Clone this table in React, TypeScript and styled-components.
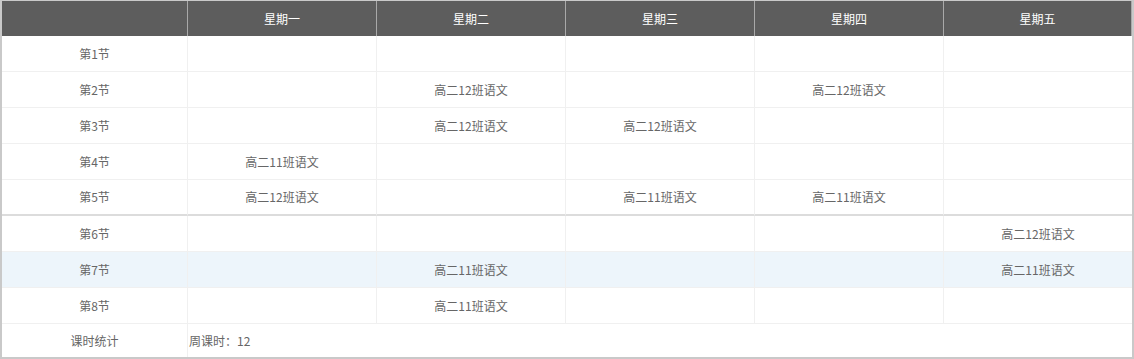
import React, { FC } from 'react';
import styled, { createGlobalStyle } from 'styled-components';

const GlobalStyle = createGlobalStyle`
  html, body {
    margin: 0;
    padding: 0;
    background: #fff;
  }

  body {
    font-family: "Microsoft YaHei", "Noto Sans CJK SC", "Noto Sans", sans-serif;
  }
`;

const days = ['星期一', '星期二', '星期三', '星期四', '星期五'];

// each row: lesson name + five cells (empty string = no class)
const lessons: string[][] = [
  ['第1节', '', '', '', '', ''],
  ['第2节', '', '高二12班语文', '', '高二12班语文', ''],
  ['第3节', '', '高二12班语文', '高二12班语文', '', ''],
  ['第4节', '高二11班语文', '', '', '', ''],
  ['第5节', '高二12班语文', '', '高二11班语文', '高二11班语文', ''],
  ['第6节', '', '', '', '', '高二12班语文'],
  ['第7节', '', '高二11班语文', '', '', '高二11班语文'],
  ['第8节', '', '高二11班语文', '', '', ''],
];

const TableOuter = styled.div`
  border: 2px solid #c9c9c9;
  border-top-width: 1px;
  box-sizing: border-box;
  width: 1134px;
  height: 359px;
  overflow: hidden;
`;

const Grid = styled.div`
  display: grid;
  grid-template-columns: 186px repeat(4, 189px) 1fr;
`;

const HeadCell = styled.div`
  background-color: #5d5d5d;
  border-right: 1px solid #a9a9a9;
  color: #fff;
  font-size: 12px;
  height: 35px;
  line-height: 35px;
  text-align: center;

  &:last-child {
    border-right: none;
  }
`;

const Cell = styled.div<{ $highlight?: boolean; $split?: boolean; $last?: boolean }>`
  background-color: ${(p) => (p.$highlight ? '#edf5fb' : '#fff')};
  border-bottom: ${(p) => (p.$split ? '2px solid #dcdcdc' : '1px solid #f0f0f0')};
  border-right: ${(p) => (p.$last ? 'none' : '1px solid #f0f0f0')};
  color: #666;
  font-size: 12px;
  height: ${(p) => (p.$split ? '34px' : '35px')};
  line-height: ${(p) => (p.$split ? '34px' : '35px')};
  text-align: center;
`;

const FooterRow = styled.div`
  display: grid;
  grid-template-columns: 186px 1fr;
  height: 34px;
`;

const FooterLabel = styled.div`
  border-right: 1px solid #f0f0f0;
  color: #666;
  font-size: 12px;
  line-height: 34px;
  text-align: center;
`;

const FooterValue = styled.div`
  color: #666;
  font-size: 12px;
  line-height: 34px;
  padding-left: 1px;
`;

const App: FC = () => (
  <>
    <GlobalStyle />
    <TableOuter>
      <Grid>
        <HeadCell />
        {days.map((d) => (
          <HeadCell key={d}>{d}</HeadCell>
        ))}
        {lessons.map((row, i) =>
          row.map((text, j) => (
            <Cell
              key={`${i}-${j}`}
              $highlight={i === 6}
              $split={i === 4}
              $last={j === row.length - 1}
            >
              {text}
            </Cell>
          )),
        )}
      </Grid>
      <FooterRow>
        <FooterLabel>课时统计</FooterLabel>
        <FooterValue>周课时：12</FooterValue>
      </FooterRow>
    </TableOuter>
  </>
);

export default App;
